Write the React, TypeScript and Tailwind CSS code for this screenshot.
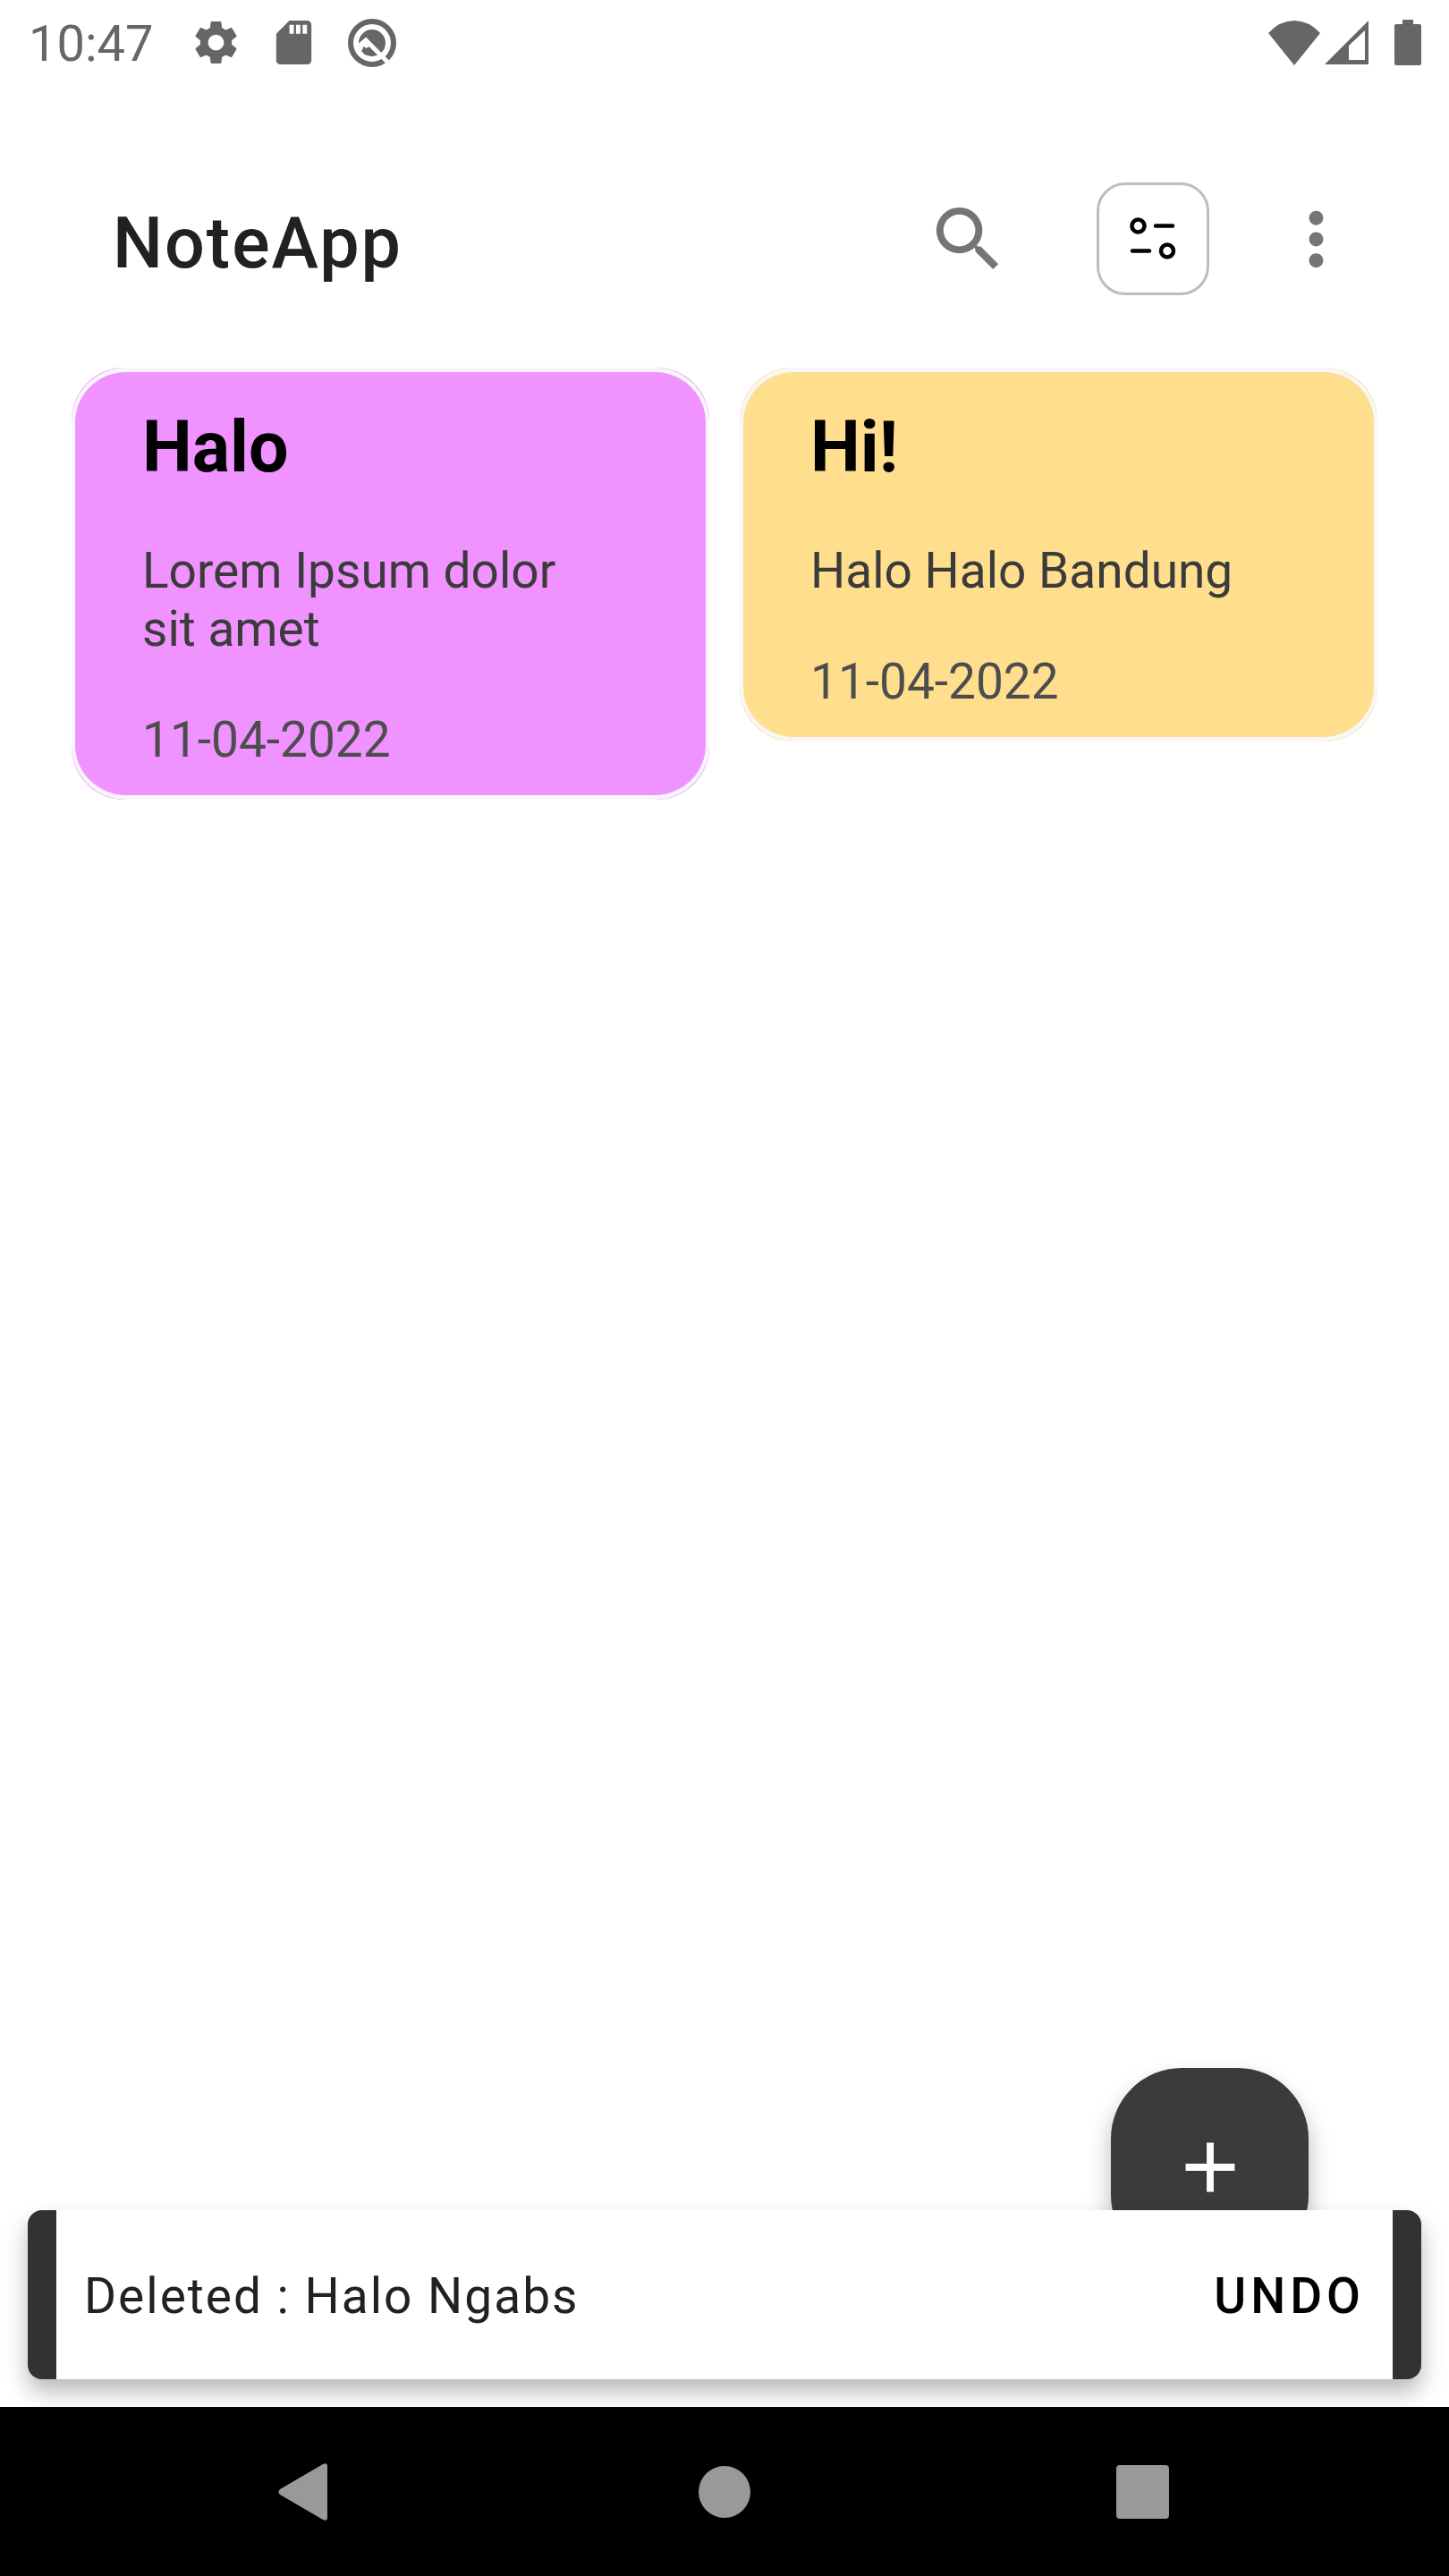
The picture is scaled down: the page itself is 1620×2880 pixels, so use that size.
import { useState } from "react";
import type { ReactNode } from "react";
import { MdAdd, MdMoreVert, MdSdCard, MdSearch, MdSettings } from "react-icons/md";

type Note = {
  id: number;
  title: string;
  body: string;
  date: string;
  tone: string;
};

const notes: Note[] = [
  { id: 1, title: "Halo", body: "Lorem Ipsum dolor sit amet", date: "11-04-2022", tone: "bg-[#f092ff]" },
  { id: 2, title: "Hi!", body: "Halo Halo Bandung", date: "11-04-2022", tone: "bg-[#ffde8d]" },
];

function DebugIcon() {
  return (
    <svg viewBox="0 0 54 54" className="size-[54px]" aria-hidden="true">
      <circle cx="27" cy="27" r="24" fill="none" stroke="currentColor" strokeWidth="6" />
      <circle cx="27" cy="27" r="15" fill="currentColor" />
      <path d="M13 30 L20 24 L48 52" fill="none" stroke="#fff" strokeWidth="5" />
      <path d="M12 29 L18 25 L24 31 L14 36 Z" fill="#fff" />
      <path d="M18 31 L29 41 Q20 42 17 38 Q15 34 18 31 Z" fill="currentColor" />
    </svg>
  );
}

function StatusBar() {
  return (
    <header className="flex h-[95px] items-center justify-between pr-[31px] pl-8 text-[#666]">
      <div className="flex items-center">
        <span className="pt-1 text-[56px] leading-[65px]">10:47</span>
        <MdSettings className="ml-[41px] size-[59px]" aria-hidden="true" />
        <MdSdCard className="ml-7 size-[59px]" aria-hidden="true" />
        <span className="ml-[31px]">
          <DebugIcon />
        </span>
      </div>
      <div className="flex items-center">
        <svg viewBox="0 0 58 50" className="h-[50px] w-[58px]" fill="currentColor" aria-hidden="true">
          <path d="M0 14 Q13 0 29 0 Q45 0 58 14 L29 50 Z" />
        </svg>
        <svg viewBox="0 0 49 49" className="ml-[5px] size-[49px]" fill="currentColor" aria-hidden="true">
          <path fillRule="evenodd" d="M0 49 L49 0 V49 Z M27 28 V44 H45 V11 Z" />
        </svg>
        <svg viewBox="0 0 30 51" className="ml-[29px] h-[51px] w-[30px]" fill="currentColor" aria-hidden="true">
          <path d="M9 0 H21 V5 H28 Q30 5 30 7 V49 Q30 51 28 51 H2 Q0 51 0 49 V7 Q0 5 2 5 H9 Z" />
        </svg>
      </div>
    </header>
  );
}

function AppBar() {
  return (
    <div className="flex items-center justify-between pt-[109px] pr-[101px] pl-[126px]">
      <h1 className="pt-2.5 text-[79px] leading-[93px] font-medium tracking-[2px] text-[#212121]">NoteApp</h1>
      <div className="flex items-center text-[#757575]">
        <button type="button" aria-label="Search">
          <MdSearch className="size-[95px]" />
        </button>
        <button
          type="button"
          aria-label="Filter"
          className="ml-24 size-[126px] rounded-[32px] border-[3px] border-[#bdbdbd] text-black"
        >
          <svg viewBox="0 0 120 120" className="size-full" fill="none" stroke="currentColor" strokeWidth="4.5">
            <circle cx="43.5" cy="45.5" r="7" />
            <path d="M63 45.5 H82 M37 73.5 H56" strokeLinecap="round" />
            <circle cx="76" cy="73.5" r="7" />
          </svg>
        </button>
        <button type="button" aria-label="More options" className="ml-[72px]">
          <MdMoreVert className="size-[95px]" />
        </button>
      </div>
    </div>
  );
}

function NoteCard({ note }: { note: Note }) {
  return (
    <article className={`rounded-[59px] ${note.tone}`}>
      <div
        className={`rounded-[61px] border-x-4 border-y-[5px] border-[#f7f7f9] pt-[38px] pr-[114px] pb-[29px] pl-[75px] ${note.tone}`}
      >
        <h2 className="text-[79px] leading-[93px] font-bold text-black">{note.title}</h2>
        <p className="mt-[59px] text-[55px] leading-[65px] text-[#3b3b3b]">{note.body}</p>
        <p className="mt-[59px] text-[55px] leading-[65px] text-[#4d4d4d]">{note.date}</p>
      </div>
    </article>
  );
}

function Snackbar({ onUndo }: { onUndo: () => void }) {
  return (
    <div
      role="status"
      className="absolute inset-x-[31px] bottom-[31px] rounded-2xl bg-[#323232] px-8 shadow-[0_14px_26px_rgba(0,0,0,0.28)]"
    >
      <div className="flex h-[189px] items-center justify-between bg-white px-[31px] pt-[3px]">
        <span className="text-[55px] leading-[65px] tracking-[2px] text-[#212121]">Deleted : Halo Ngabs</span>
        <button type="button" onClick={onUndo} className="text-[55px] leading-[65px] font-medium tracking-[5px] text-black">
          UNDO
        </button>
      </div>
    </div>
  );
}

function NavButton({ label, children }: { label: string; children: ReactNode }) {
  return (
    <button type="button" aria-label={label} className="flex items-center justify-center">
      <svg viewBox="0 0 94 94" className="size-[94px]" fill="#999">
        {children}
      </svg>
    </button>
  );
}

export default function App() {
  const [snackbarOpen, setSnackbarOpen] = useState(true);

  return (
    <div className="flex min-h-screen flex-col bg-white font-['Roboto',sans-serif]">
      <StatusBar />
      <main className="relative flex-1 overflow-hidden">
        <AppBar />
        <section aria-label="Notes" className="mt-[81px] grid grid-cols-2 items-start gap-[34px] px-20">
          {notes.map((note) => (
            <NoteCard key={note.id} note={note} />
          ))}
        </section>
        <button
          type="button"
          aria-label="Add note"
          className="absolute right-[157px] bottom-[158px] flex size-[221px] items-center justify-center rounded-[79px] bg-[#3b3b3b] text-white shadow-[0_14px_26px_rgba(0,0,0,0.28)]"
        >
          <MdAdd className="size-[94px]" />
        </button>
        {snackbarOpen && <Snackbar onUndo={() => setSnackbarOpen(false)} />}
      </main>
      <nav className="grid h-[189px] grid-cols-3 bg-black px-[109px]">
        <NavButton label="Back">
          <path d="M17 44 Q14 47 17 50 L65 78 Q70 80 70 76 V18 Q70 14 65 16 Z" />
        </NavButton>
        <NavButton label="Home">
          <circle cx="47" cy="47" r="29" />
        </NavButton>
        <NavButton label="Recent apps">
          <rect x="18" y="17" width="59" height="60" rx="4" />
        </NavButton>
      </nav>
    </div>
  );
}
